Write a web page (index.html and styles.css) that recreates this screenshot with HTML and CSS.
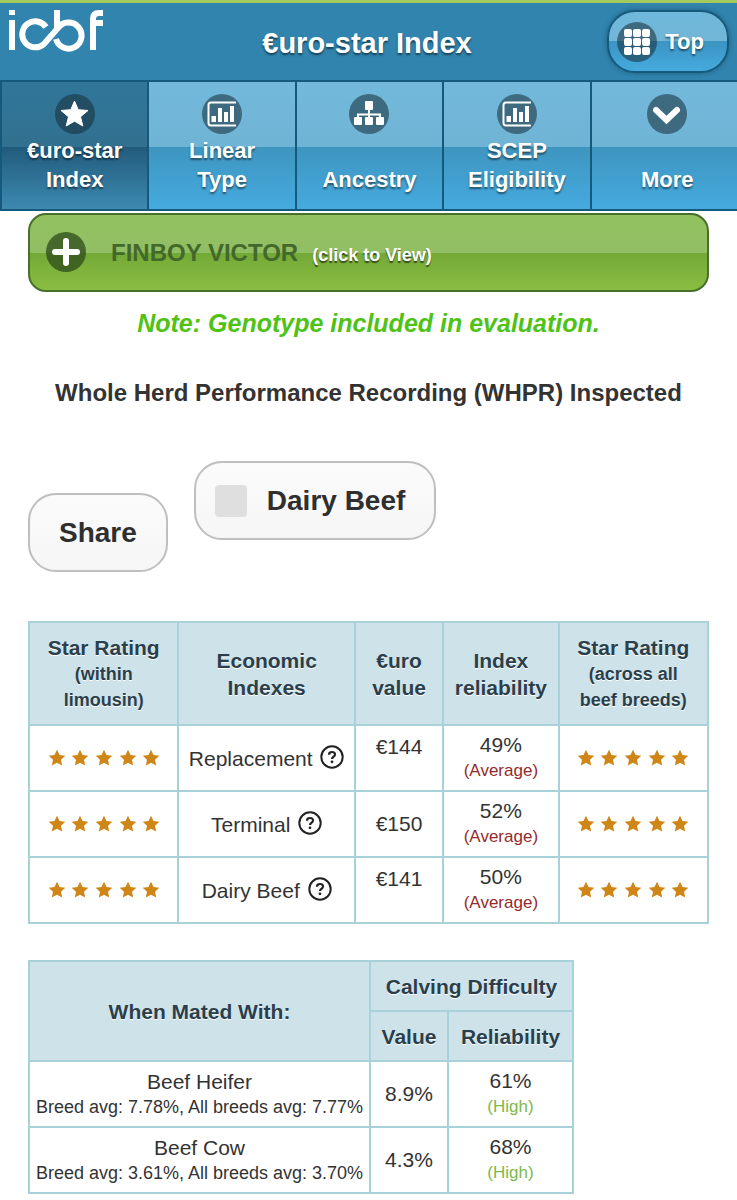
FILE: index.html
```html
<!DOCTYPE html>
<html lang="en">
<head>
<meta charset="utf-8">
<meta name="viewport" content="width=device-width, initial-scale=1">
<title>€uro-star Index</title>
<link rel="stylesheet" href="styles.css">
</head>
<body>
<svg class="defs" aria-hidden="true">
  <symbol id="star" viewBox="0 0 18 18"><path d="M9 .8l2.500 5.300 5.800.7-4.300 4 1.200 5.800L9 13.700l-5.200 2.900L5 10.800.7 6.800l5.800-.7z"/></symbol>
  <symbol id="chart" viewBox="0 0 40 40"><path d="M34 8.500H9q-2.500 0-2.500 2.500v18q0 2.500 2.500 2.500H34" fill="none" stroke="#fff" stroke-width="2"/><path d="M9.500 22h4.500v6H9.500zM16 14h4v14h-4zM22 18h4v10h-4zM28 12h4v16h-4z" fill="#fff"/></symbol>
  <symbol id="help" viewBox="0 0 24 24"><circle cx="12" cy="12" r="10.700" fill="none" stroke="#222" stroke-width="2"/><path d="M9 9.700q0-2.700 3-2.700t3 2.400q0 1.400-1.500 2.300T12 14" fill="none" stroke="#222" stroke-width="2.200"/><circle cx="12" cy="16.800" r="1.400" fill="#222"/></symbol>
  <symbol id="stars" viewBox="0 0 112 18"><use href="#star" x="0" width="18" height="18"/><use href="#star" x="23" width="18" height="18"/><use href="#star" x="47" width="18" height="18"/><use href="#star" x="71" width="18" height="18"/><use href="#star" x="94" width="18" height="18"/></symbol>
</svg>

<header class="header">
  <svg class="logo" viewBox="0 0 100 44" role="img" aria-label="icbf">
    <g fill="none" stroke="#fff" stroke-width="6">
      <path d="M7 2v5M7 12v30"/>
      <path d="M41 19A13 13 0 1 0 39 36L53 20A13 13 0 1 1 51 31"/>
      <path d="M52 2v19"/>
      <path d="M88 42V11q0-6 6-6h4M88 15h10"/>
    </g>
  </svg>
  <h1 class="title">€uro-star Index</h1>
  <button class="top-button" type="button">
    <svg class="icon" viewBox="0 0 40 40" aria-hidden="true"><g fill="#fff"><rect x="7" y="7" width="8" height="8" rx="2"/><rect x="16" y="7" width="8" height="8" rx="2"/><rect x="25" y="7" width="8" height="8" rx="2"/><rect x="7" y="16" width="8" height="8" rx="2"/><rect x="16" y="16" width="8" height="8" rx="2"/><rect x="25" y="16" width="8" height="8" rx="2"/><rect x="7" y="25" width="8" height="8" rx="2"/><rect x="16" y="25" width="8" height="8" rx="2"/><rect x="25" y="25" width="8" height="8" rx="2"/></g></svg>
    Top
  </button>
</header>

<nav class="tabs">
  <a class="tab tab-active" href="#" aria-current="page">
    <svg class="icon" viewBox="0 0 40 40" aria-hidden="true"><path d="M19.500 7l3.700 8.700 9.800.8-7.500 6.300 2.300 9.200-8.300-4.800-8.300 4.800 2.300-9.200L6 16.500l9.800-.8z" fill="#fff" stroke="#fff" stroke-linejoin="round"/></svg>
    <span class="tab-label">€uro-star<br>Index</span>
  </a>
  <a class="tab" href="#">
    <svg class="icon" aria-hidden="true"><use href="#chart"/></svg>
    <span class="tab-label">Linear<br>Type</span>
  </a>
  <a class="tab" href="#">
    <svg class="icon" viewBox="0 0 40 40" aria-hidden="true"><path d="M20 14v12M9 26v-5.500h22V26" fill="none" stroke="#fff" stroke-width="2"/><g fill="#fff"><rect x="16" y="7" width="8" height="9" rx="1"/><rect x="5" y="23" width="8" height="8" rx="1"/><rect x="16" y="23" width="8" height="8" rx="1"/><rect x="27" y="23" width="8" height="8" rx="1"/></g></svg>
    <span class="tab-label">Ancestry</span>
  </a>
  <a class="tab" href="#">
    <svg class="icon" aria-hidden="true"><use href="#chart"/></svg>
    <span class="tab-label">SCEP<br>Eligibility</span>
  </a>
  <a class="tab tab-more" href="#">
    <svg class="icon" viewBox="0 0 40 40" aria-hidden="true"><path d="M9 16l10.500 10L30 16" fill="none" stroke="#fff" stroke-width="6" stroke-linecap="round"/></svg>
    <span class="tab-label">More</span>
  </a>
</nav>

<main class="content">
  <button class="animal" type="button" aria-expanded="false">
    <svg class="icon" viewBox="0 0 40 40" aria-hidden="true"><path d="M20 9v22M9 20h22" stroke="#fff" stroke-width="6" stroke-linecap="round"/></svg>
    <span class="animal-text"><span class="animal-name">FINBOY VICTOR</span><span class="animal-hint">(click to View)</span></span>
  </button>

  <p class="note">Note: Genotype included in evaluation.</p>
  <p class="status">Whole Herd Performance Recording (WHPR) Inspected</p>

  <div class="actions">
    <button class="pill" type="button">Share</button>
    <label class="pill pill-check"><input class="check" type="checkbox">Dairy Beef</label>
  </div>

  <table class="grid indexes">
    <colgroup><col class="col-stars"><col class="col-name"><col class="col-value"><col class="col-rel"><col class="col-stars"></colgroup>
    <thead>
      <tr>
        <th scope="col">Star Rating<span class="sub">(within<br>limousin)</span></th>
        <th scope="col">Economic<br>Indexes</th>
        <th scope="col">€uro<br>value</th>
        <th scope="col">Index<br>reliability</th>
        <th scope="col">Star Rating<span class="sub">(across all<br>beef breeds)</span></th>
      </tr>
    </thead>
    <tbody>
      <tr>
        <td><svg class="stars" role="img" aria-label="5 stars"><use href="#stars"/></svg></td>
        <td>Replacement <svg class="help" role="img" aria-label="Help"><use href="#help"/></svg></td>
        <td class="raised">€144</td>
        <td>49%<br><span class="rating average">(Average)</span></td>
        <td><svg class="stars" role="img" aria-label="5 stars"><use href="#stars"/></svg></td>
      </tr>
      <tr>
        <td><svg class="stars" role="img" aria-label="5 stars"><use href="#stars"/></svg></td>
        <td>Terminal <svg class="help" role="img" aria-label="Help"><use href="#help"/></svg></td>
        <td>€150</td>
        <td>52%<br><span class="rating average">(Average)</span></td>
        <td><svg class="stars" role="img" aria-label="5 stars"><use href="#stars"/></svg></td>
      </tr>
      <tr>
        <td><svg class="stars" role="img" aria-label="5 stars"><use href="#stars"/></svg></td>
        <td>Dairy Beef <svg class="help" role="img" aria-label="Help"><use href="#help"/></svg></td>
        <td class="raised">€141</td>
        <td>50%<br><span class="rating average">(Average)</span></td>
        <td><svg class="stars" role="img" aria-label="5 stars"><use href="#stars"/></svg></td>
      </tr>
    </tbody>
  </table>

  <table class="grid calving">
    <colgroup><col class="col-mate"><col class="col-pct"><col class="col-calving-rel"></colgroup>
    <thead>
      <tr><th scope="col" rowspan="2">When Mated With:</th><th scope="colgroup" colspan="2">Calving Difficulty</th></tr>
      <tr><th scope="col">Value</th><th scope="col">Reliability</th></tr>
    </thead>
    <tbody>
      <tr>
        <td>Beef Heifer<br><span class="averages">Breed avg: 7.78%, All breeds avg: 7.77%</span></td>
        <td>8.9%</td>
        <td>61%<br><span class="rating high">(High)</span></td>
      </tr>
      <tr>
        <td>Beef Cow<br><span class="averages">Breed avg: 3.61%, All breeds avg: 3.70%</span></td>
        <td>4.3%</td>
        <td>68%<br><span class="rating high">(High)</span></td>
      </tr>
    </tbody>
  </table>
</main>
</body>
</html>
```
FILE: styles.css
```css
* { box-sizing: border-box; }

body {
  margin: 0;
  background: #fff;
  color: #333;
  font-family: "Liberation Sans", Helvetica, Arial, sans-serif;
  font-size: 21px;
}

button { font-family: inherit; cursor: pointer; }

.defs { display: none; }

.icon {
  flex: none;
  width: 40px;
  height: 40px;
  border-radius: 50%;
  background: rgba(24, 46, 58, 0.56);
}

.header {
  display: grid;
  grid-template-columns: 1fr auto 1fr;
  align-items: center;
  height: 80px;
  padding: 0 8px 0 5px;
  border-top: 3px solid #a4c95c;
  background: #3084ae;
}

.logo {
  align-self: start;
  width: 100px;
  height: 44px;
  margin-top: 5px;
}

.title {
  margin: 0;
  padding-top: 2px;
  color: #fff;
  font-size: 29px;
  line-height: 36px;
  text-shadow: 0 2px 2px rgba(0, 0, 0, 0.5);
}

.top-button {
  display: flex;
  justify-self: end;
  align-items: center;
  gap: 8px;
  height: 63px;
  padding: 0 23px 0 8px;
  border: 2px solid #155a7d;
  border-radius: 28px;
  background: linear-gradient(#6fb8dc, #72b6d6 50%, #3c94c2 50%, #45aade);
  box-shadow: 0 0 5px rgba(0, 0, 0, 0.3);
  color: #fff;
  font-size: 22px;
  font-weight: bold;
  text-shadow: 0 2px 2px rgba(0, 0, 0, 0.5);
}

.tabs {
  display: grid;
  grid-template-columns: repeat(5, 1fr);
  border-top: 2px solid #155a7d;
  border-bottom: 2px solid #155a7d;
}

.tab {
  display: flex;
  flex-direction: column;
  align-items: center;
  justify-content: space-between;
  height: 127px;
  padding: 12px 4px 15px;
  background: linear-gradient(#72b9db, #70b4d5 51%, #3e95c0 51%, #45aade);
  color: #fff;
  font-size: 22px;
  font-weight: bold;
  line-height: 29px;
  text-align: center;
  text-decoration: none;
  text-shadow: 0 2px 2px rgba(0, 0, 0, 0.5);
}

.tab + .tab { border-left: 2px solid #155a7d; }

.tab-active {
  border-left: 2px solid #155a7d;
  background: linear-gradient(#30779a, #32708f 51%, #215b7c 51%, #3d89b0);
}

.tab-more { padding-left: 10px; }

.content { padding: 2px 28px 8px; }

.animal {
  display: flex;
  align-items: center;
  gap: 25px;
  width: 100%;
  height: 79px;
  padding: 0 16px 2px;
  border: 2px solid #48702a;
  border-radius: 18px;
  background: linear-gradient(#92c25f, #92be64 51%, #73a936 51%, #8abd43);
}

.animal .icon { background: rgba(45, 75, 25, 0.75); }

.animal-text {
  display: flex;
  align-items: baseline;
  gap: 14px;
  padding-top: 2px;
  font-weight: bold;
}

.animal-name { color: #43692a; font-size: 24px; }

.animal-hint {
  color: #fff;
  font-size: 18px;
  text-shadow: 0 2px 1px rgba(0, 0, 0, 0.55);
}

.note,
.status {
  margin: 0;
  font-weight: bold;
  line-height: 30px;
  text-align: center;
}

.note {
  margin-top: 16px;
  color: #4fc315;
  font-size: 25px;
  font-style: italic;
}

.status {
  margin-top: 40px;
  font-size: 24px;
}

.actions {
  display: flex;
  gap: 26px;
  margin-top: 53px;
}

.pill {
  height: 79px;
  margin-top: 32px;
  padding: 0 29px;
  border: 2px solid #bfbfbf;
  border-radius: 28px;
  background: linear-gradient(#fbfbfb, #f6f6f6);
  color: #2f2f2f;
  font-size: 28px;
  font-weight: bold;
}

.pill-check {
  display: flex;
  align-items: center;
  gap: 20px;
  margin: 0 0 32px;
  padding: 0 29px 0 19px;
  cursor: pointer;
}

.check {
  width: 32px;
  height: 32px;
  margin: 0;
  border-radius: 4px;
  background: #dfdfdf;
  appearance: none;
}

.check:checked { background: #4a9bc6; }

.grid {
  border-collapse: collapse;
  table-layout: fixed;
  text-align: center;
}

.grid th,
.grid td {
  padding: 0;
  border: 2px solid #a9d1d9;
}

.grid th {
  background: #cde2e9;
  color: #2a3f4b;
  line-height: 27px;
  text-shadow: 0 1px 0 #fff;
}

.grid td {
  height: 66px;
  line-height: 24px;
}

.grid .raised { padding-bottom: 22px; }

.sub {
  display: block;
  font-size: 18px;
  line-height: 26px;
}

.indexes {
  width: 100%;
  margin-top: 49px;
}

.indexes thead tr { height: 103px; }

.col-stars { width: 22%; }
.col-name { width: 26%; }
.col-value { width: 13%; }
.col-rel { width: 17%; }

.calving { margin-top: 36px; }
.calving thead tr { height: 50px; }
.col-mate { width: 341px; }
.col-pct { width: 78px; }
.col-calving-rel { width: 125px; }

.stars {
  display: block;
  width: 112px;
  height: 18px;
  margin: 0 auto;
  fill: #cf8617;
}

.help {
  width: 24px;
  height: 24px;
  margin-left: 2px;
  vertical-align: -3px;
}

.rating { font-size: 17px; }
.average { color: #972a2a; }
.high { color: #7db84a; }
.averages { font-size: 18px; }
```
